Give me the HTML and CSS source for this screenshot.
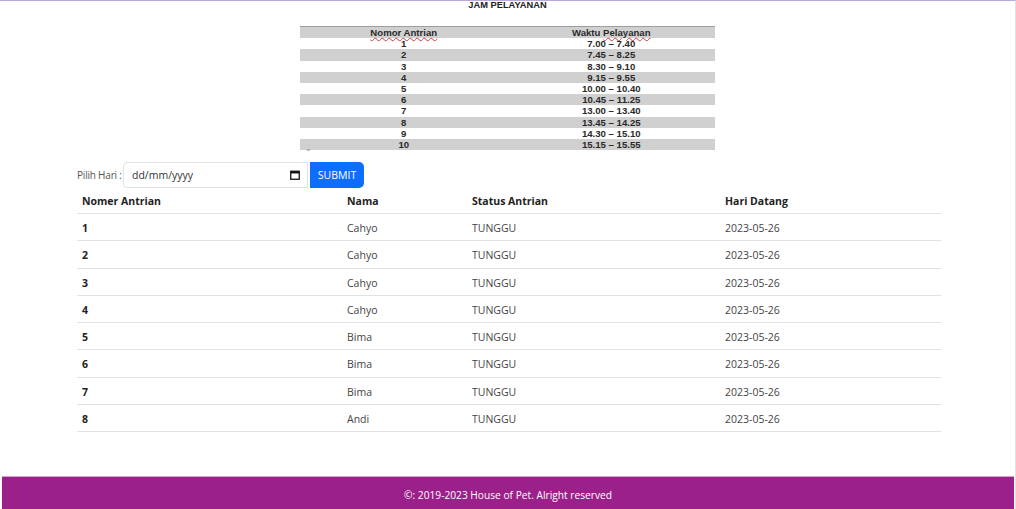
FILE: index.html
```html
<!DOCTYPE html>
<html lang="id">
<head>
<meta charset="utf-8">
<title>Antrian - House of Pet</title>
<link rel="stylesheet" href="styles.css">
</head>
<body>
<div class="page">
  <h1 class="jam-title">JAM PELAYANAN</h1>
  <div class="jam">
    <div class="jam-row head"><span><u class="spell">Nomor Antrian</u></span><span>Waktu <u class="spell">Pelayanan</u></span></div>
    <div class="jam-row"><span>1</span><span>7.00 – 7.40</span></div>
    <div class="jam-row alt"><span>2</span><span>7.45 – 8.25</span></div>
    <div class="jam-row"><span>3</span><span>8.30 – 9.10</span></div>
    <div class="jam-row alt"><span>4</span><span>9.15 – 9.55</span></div>
    <div class="jam-row"><span>5</span><span>10.00 – 10.40</span></div>
    <div class="jam-row alt"><span>6</span><span>10.45 – 11.25</span></div>
    <div class="jam-row"><span>7</span><span>13.00 – 13.40</span></div>
    <div class="jam-row alt"><span>8</span><span>13.45 – 14.25</span></div>
    <div class="jam-row"><span>9</span><span>14.30 – 15.10</span></div>
    <div class="jam-row alt last"><span>10</span><span>15.15 – 15.55</span><i class="caret">⌄</i></div>
  </div>

  <main class="container">
    <form class="pick">
      <label class="pick-label">Pilih Hari :</label>
      <div class="date-input">
        <span class="date-text">dd/mm/yyyy</span>
        <svg class="cal" width="10" height="10" viewBox="0 0 10 10" aria-hidden="true">
          <rect x="0.75" y="1.25" width="8.5" height="8" fill="none" stroke="#111" stroke-width="1.3"/>
          <rect x="0.75" y="1.25" width="8.5" height="2.2" fill="#111"/>
        </svg>
      </div>
      <button type="button" class="btn">SUBMIT</button>
    </form>

    <table class="antrian">
      <thead>
        <tr><th class="c1">Nomer Antrian</th><th class="c2">Nama</th><th class="c3">Status Antrian</th><th class="c4">Hari Datang</th></tr>
      </thead>
      <tbody>
        <tr><th>1</th><td>Cahyo</td><td>TUNGGU</td><td>2023-05-26</td></tr>
        <tr><th>2</th><td>Cahyo</td><td>TUNGGU</td><td>2023-05-26</td></tr>
        <tr><th>3</th><td>Cahyo</td><td>TUNGGU</td><td>2023-05-26</td></tr>
        <tr><th>4</th><td>Cahyo</td><td>TUNGGU</td><td>2023-05-26</td></tr>
        <tr><th>5</th><td>Bima</td><td>TUNGGU</td><td>2023-05-26</td></tr>
        <tr><th>6</th><td>Bima</td><td>TUNGGU</td><td>2023-05-26</td></tr>
        <tr><th>7</th><td>Bima</td><td>TUNGGU</td><td>2023-05-26</td></tr>
        <tr><th>8</th><td>Andi</td><td>TUNGGU</td><td>2023-05-26</td></tr>
      </tbody>
    </table>
  </main>

  <footer class="footer">©: 2019-2023 House of Pet. Alright reserved</footer>
</div>
</body>
</html>
```

FILE: styles.css
```css
* { box-sizing: border-box; }

html, body {
  margin: 0;
  padding: 0;
  background: #fff;
}

body {
  font-family: "Open Sans", "Noto Sans", sans-serif;
  color: #333;
}

.page {
  min-height: 509px;
  border-top: 1px solid #b9a8dc;
  border-right: 1px solid #e2e2e2;
  width: 1016px;
  display: flex;
  flex-direction: column;
}

.jam-title {
  margin: 0;
  font-family: "Liberation Sans", Arial, sans-serif;
  font-size: 9.3px;
  font-weight: bold;
  line-height: 9px;
  text-align: center;
  color: #222;
}

.jam {
  width: 415px;
  margin: 16px auto 0;
  border-top: 1px solid #9e9e9e;
  font-family: "Liberation Sans", Arial, sans-serif;
  font-size: 9.6px;
  font-weight: bold;
  color: #2a2a2a;
}

.jam-row {
  display: grid;
  grid-template-columns: 1fr 1fr;
  height: 11.2px;
  line-height: 11.8px;
  text-align: center;
  position: relative;
}

.jam-row.head,
.jam-row.alt {
  background: #d0d0d0;
}

.spell {
  text-decoration: underline wavy #d23b3b;
  text-decoration-thickness: 1px;
  text-underline-offset: 1px;
}

.caret {
  position: absolute;
  left: 5px;
  top: 4px;
  font-style: normal;
  font-weight: normal;
  font-size: 8px;
  color: #888;
}

.container {
  width: 864px;
  margin: 12px 0 0 77px;
}

.pick {
  display: flex;
  align-items: center;
  height: 26px;
  margin: 0;
}

.pick-label {
  width: 46px;
  font-size: 10px;
  letter-spacing: -0.2px;
  color: #555;
  white-space: nowrap;
}

.date-input {
  width: 185px;
  height: 26px;
  border: 1px solid #dee2e6;
  border-radius: 4px 0 0 4px;
  display: flex;
  align-items: center;
  justify-content: space-between;
  padding: 0 7px 0 8px;
}

.date-text {
  font-size: 10.5px;
  color: #333;
}

.cal { display: block; }

.btn {
  margin-left: 2px;
  height: 26px;
  width: 54px;
  border: 0;
  border-radius: 0 5px 5px 0;
  background: #0d6efd;
  color: #fff;
  font-family: "Open Sans", "Noto Sans", sans-serif;
  font-size: 10.5px;
  padding: 0;
}

.antrian {
  width: 864px;
  border-collapse: collapse;
  font-size: 10.5px;
  text-align: left;
}

.antrian th,
.antrian td {
  padding: 6px 5px 4px;
  line-height: 16.25px;
  border-bottom: 1px solid #dee2e6;
  vertical-align: middle;
}

.antrian thead th {
  line-height: 15px;
  color: #222;
  font-weight: bold;
}

.antrian tbody th {
  font-weight: bold;
  color: #222;
}

.antrian td { color: #444; }

.c1 { width: 265px; }
.c2 { width: 125px; }
.c3 { width: 253px; }
.c4 { width: 221px; }

.footer {
  margin: auto 1px 0 2px;
  height: 33px;
  padding-top: 3px;
  border-top: 1px solid #d6a3cf;
  background: #9b2089;
  color: #fff;
  font-size: 10.2px;
  display: flex;
  align-items: center;
  justify-content: center;
}
```
